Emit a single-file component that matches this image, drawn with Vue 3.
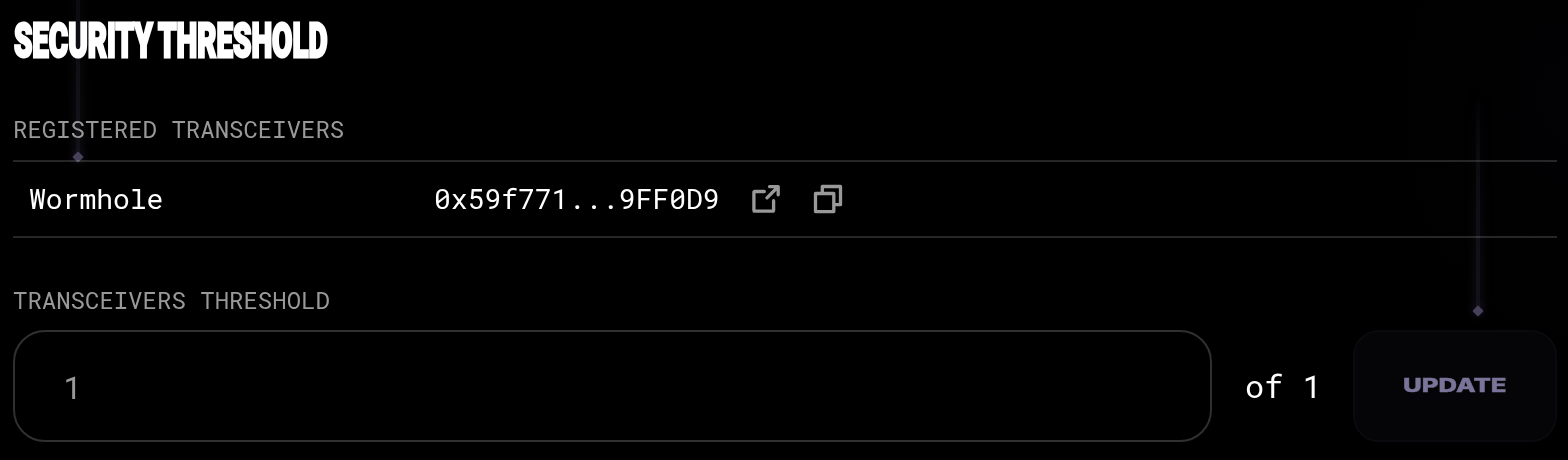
<script setup>
const transceivers = [{ name: 'Wormhole', address: '0x59f771...9FF0D9' }]
</script>

<template>
  <main class="page">
    <div class="beam beam-left"><i></i></div>
    <div class="beam beam-right"><i></i></div>
    <svg class="title" viewBox="0 0 330 48" role="heading" aria-level="1">
      <text x="0.9" y="40" textLength="313.6" lengthAdjust="spacingAndGlyphs">SECURITY THRESHOLD</text>
    </svg>
    <h2 class="label">REGISTERED TRANSCEIVERS</h2>
    <div class="table">
      <div v-for="t in transceivers" :key="t.address" class="row">
        <span class="name">{{ t.name }}</span>
        <span class="address">{{ t.address }}</span>
        <svg class="icon" viewBox="0 0 30 30">
          <path d="M13.3 7.5H4.1a1.2 1.2 0 0 0-1.2 1.2V26a1.2 1.2 0 0 0 1.2 1.2h17.3a1.2 1.2 0 0 0 1.2-1.2V16.7M18.5 2.6h8.7v8.2M26.8 3L16 13.8" />
        </svg>
        <svg class="icon" viewBox="0 0 30 30">
          <path d="M2.5 9.5h18.3v18.1h-18.3zM9.3 8.5V2.5h18.2v18.2H22" />
        </svg>
      </div>
    </div>
    <h2 class="label second">TRANSCEIVERS THRESHOLD</h2>
    <div class="form">
      <div class="field">1</div>
      <span class="total">of 1</span>
      <button class="update">
        <svg viewBox="0 0 104 20"><text x="0" y="17.1" textLength="103.5" lengthAdjust="spacingAndGlyphs">UPDATE</text></svg>
      </button>
    </div>
  </main>
</template>

<style>
body { background: #000; }
</style>

<style scoped>
.page {
  position: relative;
  z-index: 0;
  box-sizing: border-box;
  height: 460px;
  padding: 17px 11px 0 13px;
  overflow: hidden;
  opacity: 0.999;
  background: radial-gradient(ellipse 180px 260px at 1568px 100px, #020204, #000);
  color: #fff;
  font-family: "Roboto Mono", "DejaVu Sans Mono", monospace;
}
.title { display: block; width: 330px; height: 48px; overflow: visible; }
.title text {
  font: 900 47.5px Roboto, sans-serif;
  word-spacing: -2px;
  fill: #fff;
  stroke: #fff;
  stroke-width: 2.8;
}
.label {
  margin: 48px 0 0;
  height: 32px;
  font-size: 24px;
  font-weight: 400;
  line-height: 32px;
  color: #999;
}
.table { margin-top: 15px; border-top: 2px solid rgba(255, 255, 255, 0.15); }
.row {
  display: flex;
  align-items: center;
  height: 74px;
  padding-left: 16px;
  border-bottom: 2px solid rgba(255, 255, 255, 0.15);
  font-size: 28px;
}
.name { width: 405px; padding-bottom: 2px; }
.address { width: 317px; padding-bottom: 2px; }
.icon { width: 30px; height: 30px; margin-right: 32px; }
.icon path { fill: none; stroke: #999; stroke-width: 3.3; stroke-linecap: round; stroke-linejoin: round; }
.label.second { margin-top: 46px; }
.form { display: flex; align-items: center; height: 112px; margin-top: 14px; font-size: 32px; }
.field {
  box-sizing: border-box;
  width: 1199px;
  height: 112px;
  padding-left: 48px;
  border: 2px solid #303030;
  border-radius: 32px;
  line-height: 110px;
  color: #999;
}
.total { width: 108px; margin-left: 33px; padding-bottom: 2px; white-space: pre; }
.update {
  flex: 1;
  height: 112px;
  padding: 0;
  border: 2px solid #0a0a0e;
  border-radius: 26px;
  background: #050508;
}
.update svg { width: 104px; height: 20px; overflow: visible; }
.update text { font: 800 19px Inter, sans-serif; fill: #7a7499; stroke: #7a7499; stroke-width: 0.4; }
.beam {
  position: absolute;
  z-index: -1;
  width: 4px;
  background: linear-gradient(transparent, #211f2b);
}
.beam::before {
  content: "";
  position: absolute;
  inset: 0 -3px;
  background: linear-gradient(transparent, #0d0c12);
  filter: blur(4px);
}
.beam i {
  position: absolute;
  left: -2px;
  bottom: -4px;
  width: 8px;
  height: 8px;
  border-radius: 1px;
  background: #464159;
  transform: rotate(45deg);
  box-shadow: 0 0 10px #1c192a;
}
.beam-left { left: 76px; top: -80px; height: 237px; }
.beam-right { left: 1476px; top: 90px; height: 221px; }
</style>
